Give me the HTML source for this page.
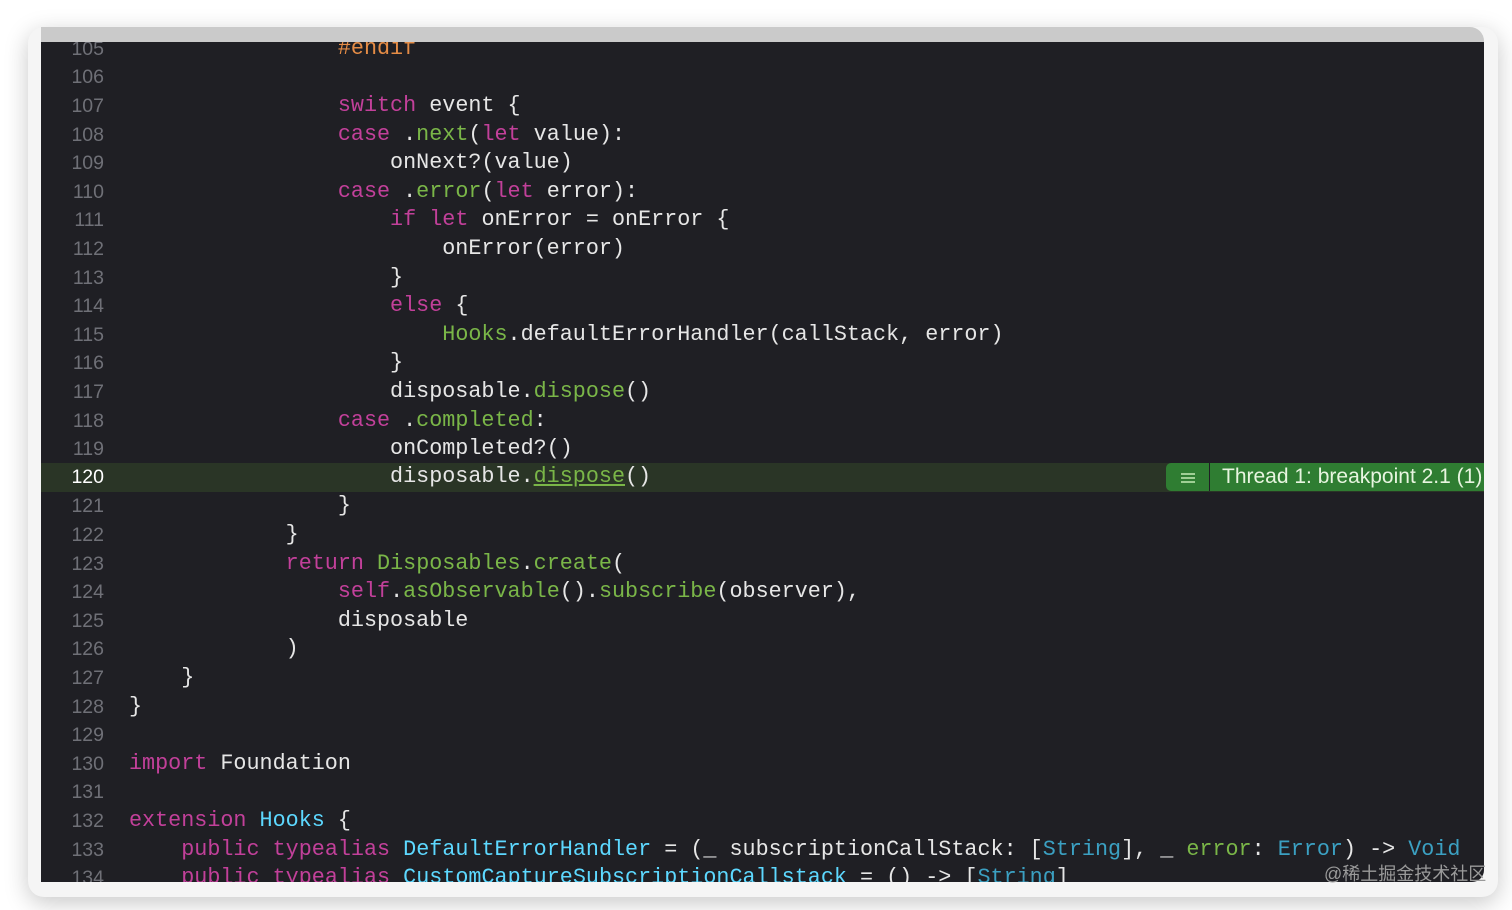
<!DOCTYPE html>
<html><head><meta charset="utf-8"><style>
html,body{margin:0;padding:0;background:#fff;width:1512px;height:910px;overflow:hidden}
.win{position:absolute;left:28px;top:27px;width:1470px;height:870px;border-radius:16px;box-shadow:0 6px 24px rgba(0,0,0,.22);background:#f5f5f5;overflow:hidden}
.strip{position:absolute;left:41px;top:27px;width:1443px;height:15px;background:#cacaca;border-top-right-radius:14px}
.panel{position:absolute;left:41px;top:42px;width:1443px;height:840px;background:#1f1f24;overflow:hidden;border-bottom-right-radius:12px}
.row{position:absolute;left:0;width:1443px;height:28.6px;font-family:"Liberation Mono",monospace;font-size:21.75px;line-height:28.6px;color:#e6e6e6;white-space:pre}
.ln{position:absolute;right:1380px;width:60px;text-align:right;font-family:"Liberation Sans",sans-serif;font-size:19.5px;color:#6f7077}
.code{position:absolute;left:88px}
.k{color:#c2409a}.g{color:#7ab648}.c{color:#5dd8ff}.t{color:#3ba0c2}.o{color:#e58c46}
.hl{background:#2a3526}
.hl .ln{color:#fff}
.badge{position:absolute;left:1125px;top:0;height:28px;width:318px;background:#2f7d32;font-family:"Liberation Sans",sans-serif;font-size:21px;color:#e8f5e0;line-height:28px;border-radius:5px 0 0 5px}
.badge .ic{position:absolute;left:0;width:43px;height:28px;border-right:1px solid #1f1f24}
.badge .ic i{position:absolute;left:15px;width:14px;height:1.5px;background:#9fcf95}
.badge span{position:absolute;left:56px}
.wm{position:absolute;left:1324px;top:860px;font-family:"Liberation Sans","Noto Sans CJK SC",sans-serif;font-size:18px;color:#9a9a9a}
</style></head><body>
<div class="win"></div>
<div class="strip"></div>
<div class="panel">
<div class="row" style="top:-7.3px"><span class="ln">105</span><span class="code">                <span class="o">#endif</span></span></div>
<div class="row" style="top:21.3px"><span class="ln">106</span></div>
<div class="row" style="top:49.9px"><span class="ln">107</span><span class="code">                <span class="k">switch</span> event {</span></div>
<div class="row" style="top:78.5px"><span class="ln">108</span><span class="code">                <span class="k">case</span> .<span class="g">next</span>(<span class="k">let</span> value):</span></div>
<div class="row" style="top:107.1px"><span class="ln">109</span><span class="code">                    onNext?(value)</span></div>
<div class="row" style="top:135.7px"><span class="ln">110</span><span class="code">                <span class="k">case</span> .<span class="g">error</span>(<span class="k">let</span> error):</span></div>
<div class="row" style="top:164.3px"><span class="ln">111</span><span class="code">                    <span class="k">if</span> <span class="k">let</span> onError = onError {</span></div>
<div class="row" style="top:192.9px"><span class="ln">112</span><span class="code">                        onError(error)</span></div>
<div class="row" style="top:221.5px"><span class="ln">113</span><span class="code">                    }</span></div>
<div class="row" style="top:250.1px"><span class="ln">114</span><span class="code">                    <span class="k">else</span> {</span></div>
<div class="row" style="top:278.7px"><span class="ln">115</span><span class="code">                        <span class="g">Hooks</span>.defaultErrorHandler(callStack, error)</span></div>
<div class="row" style="top:307.3px"><span class="ln">116</span><span class="code">                    }</span></div>
<div class="row" style="top:335.9px"><span class="ln">117</span><span class="code">                    disposable.<span class="g">dispose</span>()</span></div>
<div class="row" style="top:364.5px"><span class="ln">118</span><span class="code">                <span class="k">case</span> .<span class="g">completed</span>:</span></div>
<div class="row" style="top:393.1px"><span class="ln">119</span><span class="code">                    onCompleted?()</span></div>
<div class="row hl" style="top:421.2px"><span class="ln">120</span><span class="code">                    disposable.<span class="g" style="text-decoration:underline">dispose</span>()</span><div class="badge"><div class="ic"><i style="top:10px"></i><i style="top:14px"></i><i style="top:18px"></i></div><span>Thread 1: breakpoint 2.1 (1)</span></div></div>
<div class="row" style="top:450.3px"><span class="ln">121</span><span class="code">                }</span></div>
<div class="row" style="top:478.9px"><span class="ln">122</span><span class="code">            }</span></div>
<div class="row" style="top:507.5px"><span class="ln">123</span><span class="code">            <span class="k">return</span> <span class="g">Disposables</span>.<span class="g">create</span>(</span></div>
<div class="row" style="top:536.1px"><span class="ln">124</span><span class="code">                <span class="k">self</span>.<span class="g">asObservable</span>().<span class="g">subscribe</span>(observer),</span></div>
<div class="row" style="top:564.7px"><span class="ln">125</span><span class="code">                disposable</span></div>
<div class="row" style="top:593.3px"><span class="ln">126</span><span class="code">            )</span></div>
<div class="row" style="top:621.9px"><span class="ln">127</span><span class="code">    }</span></div>
<div class="row" style="top:650.5px"><span class="ln">128</span><span class="code">}</span></div>
<div class="row" style="top:679.1px"><span class="ln">129</span></div>
<div class="row" style="top:707.7px"><span class="ln">130</span><span class="code"><span class="k">import</span> Foundation</span></div>
<div class="row" style="top:736.3px"><span class="ln">131</span></div>
<div class="row" style="top:764.9px"><span class="ln">132</span><span class="code"><span class="k">extension</span> <span class="c">Hooks</span> {</span></div>
<div class="row" style="top:793.5px"><span class="ln">133</span><span class="code">    <span class="k">public</span> <span class="k">typealias</span> <span class="c">DefaultErrorHandler</span> = (_ subscriptionCallStack: [<span class="t">String</span>], _ <span class="g">error</span>: <span class="t">Error</span>) -> <span class="t">Void</span></span></div>
<div class="row" style="top:822.1px"><span class="ln">134</span><span class="code">    <span class="k">public</span> <span class="k">typealias</span> <span class="c">CustomCaptureSubscriptionCallstack</span> = () -> [<span class="t">String</span>]</span></div>
</div>
<div class="wm">@稀土掘金技术社区</div>
</body></html>
